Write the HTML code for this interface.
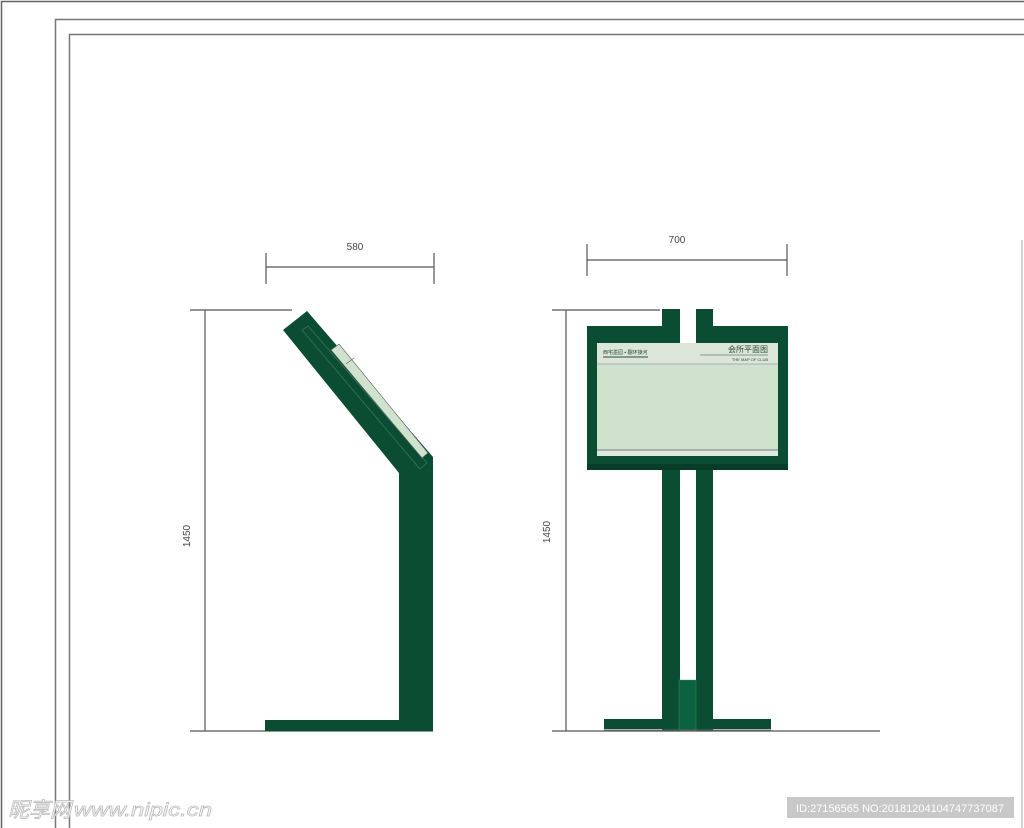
<!DOCTYPE html>
<html><head><meta charset="utf-8"><style>
html,body{margin:0;padding:0;background:#fff;width:1024px;height:828px;overflow:hidden}
svg{display:block}
</style></head><body>
<svg width="1024" height="828" viewBox="0 0 1024 828" xmlns="http://www.w3.org/2000/svg" font-family="Liberation Sans, sans-serif">
<rect width="1024" height="828" fill="#fff"/>
<path d="M1.5 828V1.5H1024" fill="none" stroke="#666" stroke-width="1.5"/>
<path d="M55.5 828V19.5H1024" fill="none" stroke="#777" stroke-width="1.5"/>
<path d="M69.5 828V34.5H1024" fill="none" stroke="#777" stroke-width="1.5"/>
<line x1="1022" y1="240" x2="1022" y2="828" stroke="#aaa" stroke-width="1"/>

<g stroke="#555" stroke-width="1.2" fill="none">
<line x1="266" y1="267" x2="434" y2="267"/>
<line x1="266" y1="253" x2="266" y2="284"/>
<line x1="434" y1="253" x2="434" y2="284"/>
<line x1="205" y1="310" x2="205" y2="731"/>
<line x1="190" y1="310" x2="292" y2="310"/>
<line x1="190" y1="731" x2="433" y2="731"/>
<line x1="587" y1="260" x2="787" y2="260"/>
<line x1="587" y1="244" x2="587" y2="276"/>
<line x1="787" y1="244" x2="787" y2="276"/>
<line x1="566" y1="310" x2="566" y2="731"/>
<line x1="552" y1="310" x2="660" y2="310"/>
<line x1="552" y1="731" x2="880" y2="731"/>
</g>
<text x="355" y="250" font-size="10" fill="#444" text-anchor="middle">580</text>
<text x="677" y="243" font-size="10" fill="#444" text-anchor="middle">700</text>
<text transform="translate(190,536) rotate(-90)" font-size="10" fill="#444" text-anchor="middle">1450</text>
<text transform="translate(550,532) rotate(-90)" font-size="10" fill="#444" text-anchor="middle">1450</text>

<polygon points="283,330 307,311 433,457 433,731 265,731 265,720 399,720 399,473" fill="#0a4d33"/>
<polygon points="302,330 308,326 427,463 420,469" fill="none" stroke="#3d7358" stroke-width="0.8"/>
<polygon points="331,350 339,344 428,453 422,458" fill="#cfe3cc" stroke="#556" stroke-width="0.6"/>
<line x1="346" y1="364" x2="354" y2="358" stroke="#556" stroke-width="0.6"/>

<rect x="662" y="309" width="18" height="422" fill="#0a4d33"/>
<rect x="696" y="309" width="17" height="422" fill="#0a4d33"/>
<rect x="587" y="326" width="201" height="144" fill="#0a4d33"/>
<rect x="680" y="326" width="16" height="18" fill="#fff"/>
<rect x="680" y="470" width="16" height="210" fill="#fff"/>
<rect x="587" y="464" width="201" height="6" fill="#073d28"/>
<rect x="597" y="343" width="181" height="113" fill="#cfe3cc"/>
<rect x="597" y="343" width="181" height="21" fill="#dbe5d8"/>
<line x1="597" y1="364" x2="778" y2="364" stroke="#aab" stroke-width="1"/>
<rect x="597" y="450" width="181" height="6" fill="#dfe8dc"/>
<line x1="597" y1="450" x2="778" y2="450" stroke="#556" stroke-width="0.8"/>
<text x="603" y="354" font-size="5" fill="#2a4a3a" font-family="Liberation Sans, Noto Sans CJK SC, sans-serif">西宅墨园 ▪ 翻环接河</text>
<line x1="603" y1="357" x2="648" y2="357" stroke="#2a4a3a" stroke-width="1"/>
<text x="768" y="352" font-size="8" fill="#2a4a3a" text-anchor="end" font-family="Liberation Sans, Noto Sans CJK SC, sans-serif">会所平面图</text>
<line x1="700" y1="355" x2="768" y2="355" stroke="#2a4a3a" stroke-width="0.6"/>
<text x="768" y="361" font-size="4" fill="#2a4a3a" text-anchor="end">THE MAP OF CLUB</text>
<rect x="604" y="719" width="167" height="10" fill="#0a4d33"/>
<rect x="679" y="680" width="17" height="50" fill="#0b6140" stroke="#3a5" stroke-width="0.4"/>
<line x1="604" y1="730" x2="771" y2="730" stroke="#666" stroke-width="1"/>

<text x="8" y="817" font-size="21" fill="#fff" stroke="#bbb" stroke-width="0.8" font-style="italic" font-family="Liberation Sans, Noto Sans CJK SC, sans-serif">昵享网</text>
<text x="74" y="816" font-size="18" fill="#fff" stroke="#bbb" stroke-width="0.7" font-style="italic" textLength="138" lengthAdjust="spacingAndGlyphs">www.nipic.cn</text>
<rect x="787" y="797" width="227" height="21" fill="#c8c8c8"/>
<text x="900" y="812" font-size="11" fill="#fff" text-anchor="middle">ID:27156565 NO:20181204104747737087</text>
</svg>
</body></html>
